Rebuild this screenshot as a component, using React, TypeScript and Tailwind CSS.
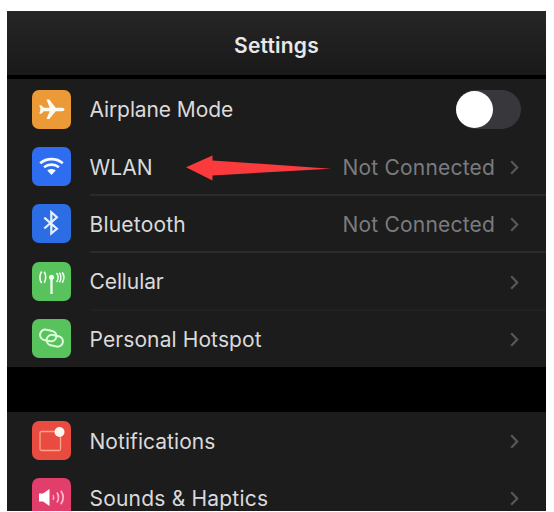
import React from 'react';

const PlaneIcon = () => (
  <svg viewBox="0 0 39 39" className="w-full h-full" fill="#fffaf0">
    <path d="M32.5 19.500c0 1-1.200 1.700-2.600 1.700h-6.200l-6.400 7.800h-2.800l3.200-7.800h-6l-2.300 2.500H7.300l1.200-4.200-1.200-4.200h2.100l2.300 2.500h6l-3.200-8.300h2.800l6.400 8.300h6.200c1.400 0 2.600.7 2.600 1.700z" />
  </svg>
);

const WifiIcon = () => (
  <svg viewBox="0 0 39 39" className="w-full h-full" fill="none" stroke="#f4f8ff" strokeWidth="2.6">
    <path d="M8.2 16.2c6.4-5.500 16.200-5.500 22.600 0" />
    <path d="M12 20.3c4.400-3.600 10.600-3.600 15 0" />
    <path d="M19.500 28l-4.200-4.400c2.400-2 6-2 8.400 0z" fill="#f4f8ff" stroke="none" />
  </svg>
);

const BluetoothIcon = () => (
  <svg viewBox="0 0 39 39" className="w-full h-full" fill="none" stroke="#e6f0ff" strokeWidth="2.200">
    <path d="M12.300 13.600l12.600 11.200-5.600 4.700V8.300l5.600 5-12.600 11.200" />
  </svg>
);

const CellularIcon = () => (
  <svg viewBox="0 0 39 39" className="w-full h-full" fill="none" stroke="#effff0" strokeWidth="1.600">
    <path d="M19.500 15v17" strokeWidth="2.300" />
    <circle cx="19.500" cy="15.200" r="2.500" fill="#effff0" stroke="none" />
    <path d="M12.200 9.800c2 3 2 8 0 11M9.600 9.500c-2.200 3.400-2.200 8.400 0 11.600" />
    <path d="M24.600 11c1.800 2.600 1.800 6.400 0 9M27.400 10.600c1.900 2.800 1.900 7 0 9.800M30.200 10.200c2.100 3.200 2.100 7.400 0 10.600" />
  </svg>
);

const HotspotIcon = () => (
  <svg viewBox="0 0 39 39" className="w-full h-full" fill="none" stroke="#d8ffd8" strokeWidth="2">
    <rect x="8" y="11.200" width="16.500" height="10.500" rx="5.250" transform="rotate(12 16.250 16.500)" />
    <rect x="14.500" y="16.500" width="16.500" height="10.500" rx="5.250" transform="rotate(12 22.750 21.750)" />
  </svg>
);

const NotificationsIcon = () => (
  <svg viewBox="0 0 39 39" className="w-full h-full" fill="none">
    <path d="M23.500 10.500H9.500q-1.500 0-1.500 1.500v16q0 1.500 1.500 1.500h17.500q1.500 0 1.500-1.500V15.500" stroke="#ffa58c" strokeWidth="1.300" />
    <circle cx="27.500" cy="11" r="5" fill="#fff4ee" />
  </svg>
);

const SoundsIcon = () => (
  <svg viewBox="0 0 39 39" className="w-full h-full" fill="none" stroke="#ffb4cc" strokeWidth="1.800">
    <path d="M7 15.500h4l6.500-4.500v17L11 23.500H7z" fill="#fff" stroke="none" />
    <path d="M21 17q1.500 2.500 0 5" strokeWidth="1.200" />
    <path d="M25 14.500q3 5 0 10M28.800 12.800q5 6.700 0 13.400" />
  </svg>
);

const Chevron = () => (
  <svg viewBox="0 0 9 15" className="w-[9px] h-[15px] shrink-0" fill="none" stroke="#58585a" strokeWidth="2.200">
    <path d="M1.200 1.200l6 6.300-6 6.300" />
  </svg>
);

interface RowProps {
  icon: React.ReactNode;
  color: string;
  label: string;
  labelClass: string;
  value?: string;
  toggle?: boolean;
  divider?: string;
}

const Row: React.FC<RowProps> = ({ icon, color, label, labelClass, value, toggle, divider = 'border-transparent' }) => (
  <div className="flex h-[57.3px] shrink-0 pl-[24.500px]">
    <div className="flex items-center shrink-0">
      <div className={`w-[39px] h-[39px] rounded-[7px] overflow-hidden ${color}`}>{icon}</div>
    </div>
    <div className={`ml-[19px] -mb-px flex flex-1 items-center justify-between border-b-2 pt-[3px] ${divider} ${toggle ? 'pr-[25px]' : 'pr-[27px]'}`}>
      <span className={`whitespace-nowrap text-[21px] text-[#dadada] ${labelClass}`}>{label}</span>
      {toggle ? (
        <div className="w-[65px] h-[39px] -mt-[2px] shrink-0 rounded-full bg-[#38373b] flex items-center">
          <div className="w-[37px] h-[37px] rounded-full bg-white" />
        </div>
      ) : (
        <div className="flex items-center gap-[15px]">
          {value && <span className="whitespace-nowrap text-[21px] tracking-[0.2px] text-[#7b7b7e]">{value}</span>}
          <Chevron />
        </div>
      )}
    </div>
  </div>
);

const App: React.FC = () => {
  return (
    <div className="relative w-[554px] h-[512px] overflow-hidden bg-white pl-[7px] pt-[11px] pb-px font-['Inter','Liberation_Sans',sans-serif]">
      <div className="flex flex-col w-[539px] h-[500px] overflow-hidden bg-black">
        {/* Header */}
        <header className="flex h-[64px] shrink-0 items-center justify-center pt-[5px] bg-gradient-to-b from-[#262626] to-[#191919]">
          <h1 className="text-[21px] font-semibold tracking-[0.2px] text-[#e8e8e8]">Settings</h1>
        </header>

        {/* Connectivity */}
        <section className="mt-[4px] h-[288px] shrink-0 bg-[#1c1c1d] pt-[1.500px]">
          <Row icon={<PlaneIcon />} color="bg-[#ec9a38]" label="Airplane Mode" labelClass="tracking-[-0.1px]" toggle />
          <Row icon={<WifiIcon />} color="bg-[#2f6df0]" label="WLAN" labelClass="tracking-[0.1px]" value="Not Connected" divider="border-[#2b2b2c]" />
          <Row icon={<BluetoothIcon />} color="bg-[#2c6de4]" label="Bluetooth" labelClass="tracking-[0.2px]" value="Not Connected" divider="border-[#2b2b2c]" />
          <Row icon={<CellularIcon />} color="bg-[#58c25c]" label="Cellular" labelClass="tracking-[-0.1px]" divider="border-[#212122]" />
          <Row icon={<HotspotIcon />} color="bg-[#58c25c]" label="Personal Hotspot" labelClass="tracking-[0.1px]" />
        </section>

        {/* Alerts */}
        <section className="mt-[45px] flex-1 bg-[#1c1c1d]">
          <Row icon={<NotificationsIcon />} color="bg-[#e94b40]" label="Notifications" labelClass="tracking-[0.05px]" />
          <Row icon={<SoundsIcon />} color="bg-[#e23e6c]" label="Sounds & Haptics" labelClass="tracking-[0.2px]" />
        </section>
      </div>

      {/* Pointer arrow over the WLAN row */}
      <svg className="absolute left-[186px] top-[155px] w-[146px] h-[26px]" viewBox="0 0 146 26">
        <path d="M0 12.300L26.500 0.500V5.500L145 13.700L26.500 20.500V25.500z" fill="#fb3a3e" />
      </svg>
    </div>
  );
};

export default App;
